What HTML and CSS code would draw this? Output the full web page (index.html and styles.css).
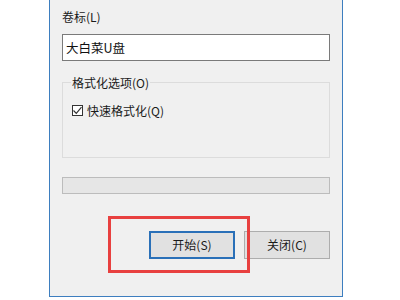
FILE: index.html
```html
<!DOCTYPE html>
<html lang="zh-CN">
<head>
<meta charset="utf-8">
<link rel="stylesheet" href="styles.css">
</head>
<body>
<div class="dialog">
  <div class="label">卷标(L)</div>
  <div class="input">大白菜U盘</div>
  <fieldset class="group">
    <legend>格式化选项(O)</legend>
    <div class="check">
      <span class="box"><svg width="11" height="11" viewBox="0 0 11 11"><path d="M1.5 5.5 L4.3 8.3 L9.5 2.2" fill="none" stroke="#333" stroke-width="1.2"/></svg></span>
      <span>快速格式化(Q)</span>
    </div>
  </fieldset>
  <div class="progress"></div>
  <div class="buttons">
    <div class="btn primary">开始(S)</div>
    <div class="btn">关闭(C)</div>
  </div>
  <div class="highlight"></div>
</div>
</body>
</html>
```
FILE: styles.css
```css
html, body {
  margin: 0;
  padding: 0;
  background: #ffffff;
}
body {
  width: 400px;
  height: 300px;
  overflow: hidden;
  font-family: "Noto Sans CJK SC", "Microsoft YaHei", sans-serif;
  font-size: 12px;
  color: #1a1a1a;
}
.dialog {
  position: relative;
  margin-left: 49px;
  width: 294px;
  height: 297px;
  background: #f0f0f0;
  border: 1px solid #3d7ebf;
  border-top: none;
  padding: 0 12px;
  box-sizing: border-box;
  display: flex;
  flex-direction: column;
}
.label {
  margin-top: 9px;
  height: 15px;
  line-height: 15px;
}
.input {
  margin-top: 10px;
  height: 27px;
  box-sizing: border-box;
  border: 1px solid #7a7a7a;
  background: #fff;
  padding-left: 3px;
  line-height: 25px;
  font-size: 12.5px;
  color: #111;
}
.group {
  margin: 14px 0 0 0;
  padding: 0 0 0 9px;
  border: 1px solid #dcdcdc;
  height: 83px;
  box-sizing: border-box;
}
.group legend {
  padding: 0 1px;
  margin-left: -1px;
  line-height: 15px;
}
.check {
  display: flex;
  align-items: center;
  margin-top: 12px;
  gap: 4px;
}
.box {
  width: 11px;
  height: 11px;
  box-sizing: border-box;
  border: 1px solid #333;
  background: #fff;
  display: flex;
}
.box svg {
  margin: -1px;
}
.progress {
  margin-top: 19px;
  height: 17px;
  box-sizing: border-box;
  border: 1px solid #bcbcbc;
  background: #e6e6e6;
}
.buttons {
  margin-top: 37px;
  display: flex;
  justify-content: flex-end;
  gap: 9px;
}
.btn {
  width: 86px;
  height: 28px;
  box-sizing: border-box;
  border: 1px solid #adadad;
  background: #e1e1e1;
  text-align: center;
  line-height: 26px;
}
.btn.primary {
  border: 2px solid #2a70b8;
  line-height: 24px;
}
.highlight {
  position: absolute;
  left: 58px;
  top: 216px;
  width: 142px;
  height: 57px;
  box-sizing: border-box;
  border: 3px solid #e8403f;
}
```
